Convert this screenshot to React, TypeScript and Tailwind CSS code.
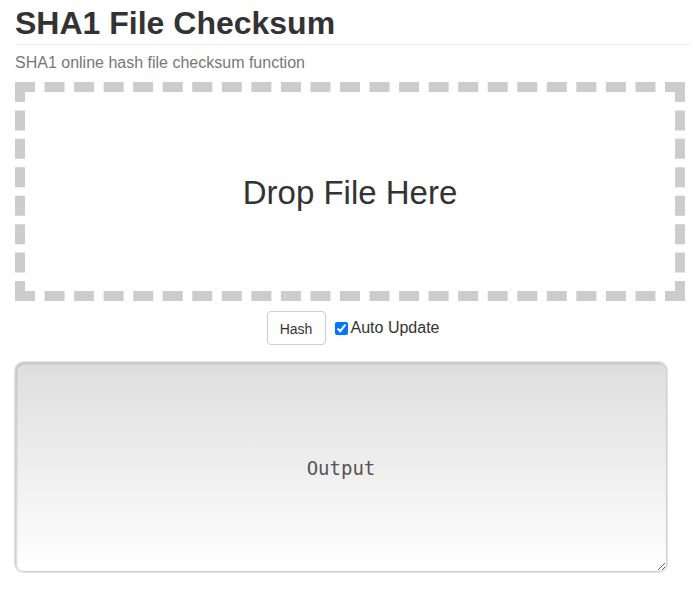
import React, { useState } from 'react';

const App: React.FC = () => {
  const [autoUpdate, setAutoUpdate] = useState(true);

  return (
    <div className="min-h-[591px] bg-white px-[15px] font-['Liberation_Sans',Arial,sans-serif] text-[#333]">
      <h1 className="pt-[4px] text-[32px] font-bold leading-[38px]">SHA1 File Checksum</h1>
      <div className="mt-[2px] w-[675px] border-t border-[#eee]" />
      <p className="mt-[9px] text-[16px] leading-[18px] text-[#777]">SHA1 online hash file checksum function</p>

      <div className="mt-[10px] flex h-[219px] w-[670px] items-center justify-center border-[10px] border-dashed border-[#ccc]">
        <span className="pt-[2px] text-[33px] leading-[36px] text-[#333]">Drop File Here</span>
      </div>

      <div className="mt-[10px] flex w-[676px] items-center justify-center gap-[9px]">
        <button className="h-[34px] w-[59px] rounded-[4px] border border-[#ccc] bg-white pt-[2px] text-[14px] text-[#333]">
          Hash
        </button>
        <label className="flex items-center gap-[3px] text-[16px] text-[#333]">
          <input
            type="checkbox"
            checked={autoUpdate}
            onChange={(e) => setAutoUpdate(e.target.checked)}
            className="m-0 h-[13px] w-[13px] accent-[#0075ff]"
          />
          Auto Update
        </label>
      </div>

      <textarea
        placeholder="Output"
        className="mt-[17px] block h-[210px] w-[652px] resize rounded-[8px] border border-[#d0d0d0] bg-gradient-to-b from-[#dedede] to-white p-[10px] pt-[91px] text-center font-['DejaVu_Sans_Mono',monospace] text-[19px] text-[#555] shadow-[inset_1px_1px_2px_rgba(0,0,0,0.15),0_0_0_1px_#e6e6e6] placeholder:text-[#555] outline-none"
      />
    </div>
  );
};

export default App;
